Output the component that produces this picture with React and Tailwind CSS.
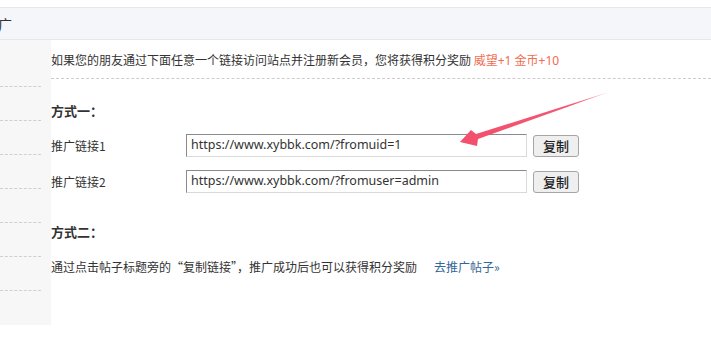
export default function App() {
  const cjk = { fontFamily: '"Noto Sans CJK SC", "Noto Sans", sans-serif' };
  const latin = { fontFamily: '"Noto Sans", "Noto Sans CJK SC", sans-serif' };
  const sideItems = [0, 1, 2, 3, 4, 5, 6, 7];
  return (
    <div className="relative w-[711px] h-[356px] bg-white overflow-hidden text-[#333]" style={cjk}>
      <div className="h-[7px]" />
      <div className="h-[33px] bg-[#f5f6fa] border-t border-b border-[#e6e7eb] flex items-center">
        <span className="text-[14px] ml-[-2px] text-[#333] leading-none">广</span>
      </div>
      <div className="flex">
        <div className="w-[51px] h-[285px] bg-[#f7f7f7] pt-[13px] flex flex-col">
          {sideItems.map((i) => (
            <div key={i} className={i < 7 ? "h-[34px] w-[41px] border-b border-dashed border-[#cfcfcf]" : "h-[34px] w-[41px]"} />
          ))}
        </div>
        <div className="flex-1 text-[12px]">
          <div className="pt-[10px] pb-[7px] border-b border-dashed border-[#cccccc] leading-[20px]">
            如果您的朋友通过下面任意一个链接访问站点并注册新会员，您将获得积分奖励{" "}
            <span className="text-[#f26c4f]" style={latin}>威望+1 金币+10</span>
          </div>
          <div className="mt-[22px] text-[13px] font-bold leading-[20px]">方式一：</div>
          <div className="mt-[13px] flex flex-col gap-[13px]">
            {["https://www.xybbk.com/?fromuid=1", "https://www.xybbk.com/?fromuser=admin"].map((v, i) => (
              <div key={i} className="flex items-center h-[23px]">
                <div className="w-[135px] leading-[20px]">推广链接{i + 1}</div>
                <div className="w-[341px] h-[23px] border border-t-[#8a8a8a] border-l-[#8a8a8a] border-b-[#d9d9d9] border-r-[#d9d9d9] flex items-center pl-[4px] text-[12.5px] text-[#333]" style={latin}>
                  {v}
                </div>
                <div className="ml-[6px] w-[46px] h-[22px] border border-[#a5a5a5] rounded-[3px] bg-[#efefef] flex items-center justify-center text-[13px] font-medium text-[#222]">
                  复制
                </div>
              </div>
            ))}
          </div>
          <div className="mt-[29px] text-[13px] font-bold leading-[20px]">方式二：</div>
          <div className="mt-[15px] leading-[20px]">
            通过点击帖子标题旁的“复制链接”，推广成功后也可以获得积分奖励
            <span className="ml-[17px] text-[#336699]">去推广帖子»</span>
          </div>
        </div>
      </div>
      <svg className="absolute left-0 top-0 pointer-events-none" width="711" height="356">
        <defs>
          <linearGradient id="ag" x1="609" y1="92" x2="460" y2="142" gradientUnits="userSpaceOnUse">
            <stop offset="0" stopColor="#f7607a" stopOpacity="0.5" />
            <stop offset="0.25" stopColor="#f45772" stopOpacity="1" />
            <stop offset="1" stopColor="#f2506c" />
          </linearGradient>
        </defs>
        <polygon points="609,92 476,134 471,130 460,142 477,146 478,139" fill="url(#ag)" />
      </svg>
    </div>
  );
}
